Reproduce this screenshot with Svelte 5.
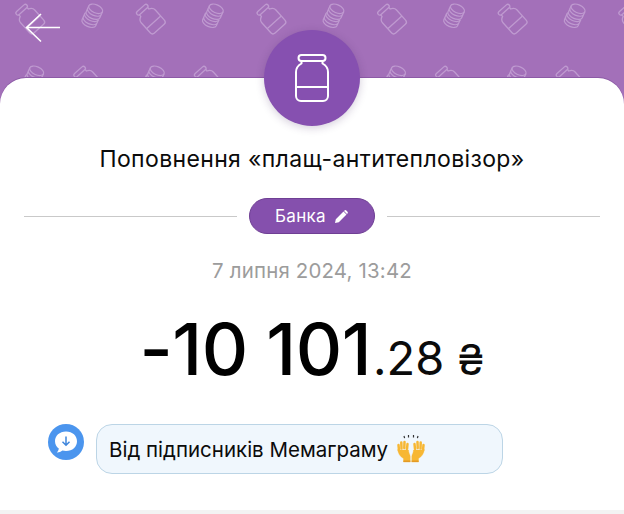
<script>
  const coins = [];
  const jars = [];
  for (let i = 0; i < 6; i++) {
    jars.push({ x: 30 + i * 120.6, y: 19 });
    coins.push({ x: 92 + i * 120.6, y: 17 });
    coins.push({ x: 33 + i * 120.6, y: 79 });
    jars.push({ x: 88 + i * 120.6, y: 81 });
  }
</script>

<div class="page">
  <header class="hero">
    <svg class="pattern" width="624" height="78" viewBox="0 0 624 78" aria-hidden="true">
      <defs>
        <g id="p-jar" fill="none" stroke="#bf9ad0" stroke-width="1.300" stroke-linejoin="round">
          <rect x="-7" y="-14.500" width="14" height="4" rx="2" />
          <path d="M-5.500-10.500v2c-2.500 1-4 2.500-4 5V10a3 3 0 0 0 3 3h13a3 3 0 0 0 3-3V-3.500c0-2.500-1.500-4-4-5v-2" />
          <path d="M-9.500 4.500H9.500" />
        </g>
        <g id="p-coin" fill="none" stroke="#bf9ad0" stroke-width="1.200">
          <ellipse cx="0" cy="-9" rx="7.500" ry="4" />
          <path d="M-7.500-9v6.500c0 2.200 3.400 4 7.500 4s7.500-1.800 7.500-4V-9M-7.500-6c0 2.200 3.400 4 7.500 4s7.500-1.800 7.500-4" />
          <path d="M-7.500-1.500c-.3.500-.5 1-.5 1.500 0 2.200 3.400 4 7.500 4S7 2.200 7 0" />
          <path d="M-8 0v6.500c0 2.200 3.400 4 7.500 4S7 8.700 7 6.500V0M-8 3.500c0 2.200 3.400 4 7.500 4S7 5.700 7 3.500" />
        </g>
      </defs>
      {#each jars as j}
        <use href="#p-jar" transform="translate({j.x} {j.y}) rotate(-42)" />
      {/each}
      {#each coins as c}
        <use href="#p-coin" transform="translate({c.x} {c.y}) rotate(24)" />
      {/each}
    </svg>
    <svg class="back" width="36" height="32" viewBox="0 0 36 32" aria-hidden="true">
      <path d="M35 14.500H2M16 1L1.500 14.500 16 28.500" fill="none" stroke="#fff" stroke-width="1.600" />
    </svg>
  </header>

  <main class="card">
    <div class="avatar">
      <svg width="34" height="48" viewBox="0 0 34 48" aria-hidden="true">
        <g fill="none" stroke="#fff" stroke-width="2" stroke-linejoin="round">
          <rect x="3.500" y="1" width="27" height="6" rx="3" />
          <path d="M6.500 7v2.500C3 11.500 1 14 1 18v24a5 5 0 0 0 5 5h22a5 5 0 0 0 5-5V18c0-4-2-6.500-5.500-8.500V7" />
          <path d="M1 33H33" />
        </g>
      </svg>
    </div>

    <h1 class="title">Поповнення «плащ-антитепловізор»</h1>

    <div class="divider">
      <span class="rule"></span>
      <button class="pill" type="button">
        Банка
        <svg width="15" height="15" viewBox="0 0 15 15" aria-hidden="true">
          <path d="M1 14l.8-3.800L9.500 2.500l3 3-7.700 7.700z M10.500 1.500a1.300 1.300 0 0 1 1.800 0l1.200 1.200a1.300 1.300 0 0 1 0 1.800l-.5.500-3-3z" fill="#fff" />
        </svg>
      </button>
      <span class="rule"></span>
    </div>

    <p class="date">7 липня 2024, 13:42</p>

    <p class="amount"><span class="whole">-10 101</span><span class="frac">.28</span><span class="cur">₴</span></p>

    <div class="message">
      <span class="badge">
        <svg width="36" height="36" viewBox="0 0 36 36" aria-hidden="true">
          <circle cx="18" cy="18" r="18" fill="#4b95ee" />
          <path d="M18 7.500c6.600 0 11 4.300 11 9.800s-4.400 9.800-11 9.800c-1.300 0-2.500-.2-3.600-.5-1.500 1.300-3.500 2-5.600 1.900 1-.9 1.800-2.300 2-3.900C8.600 23 7 20.300 7 17.300c0-5.500 4.400-9.800 11-9.800z" fill="#fff" />
          <path d="M18 12.500v8.500M14.500 17.800l3.500 3.500 3.500-3.500" fill="none" stroke="#3f86dc" stroke-width="1.500" />
        </svg>
      </span>
      <div class="bubble">
        <span>Від підписників Мемаграму</span>
        <svg class="hands" width="30" height="30" viewBox="0 0 30 30" role="img" aria-label="🙌">
          <path d="M8 2l.6 2.200M12.500 1v2.500M17.500 1v2.500M22 2l-.6 2.200" stroke="#333" stroke-width="1.200" />
          <g fill="#f7b733" stroke="#f7b733" stroke-linecap="round">
            <path d="M3 16.500L2.500 11M5.500 14.500L5.300 8.500M8.300 14L8.500 8M11 15L11.500 10" fill="none" stroke-width="2.500" />
            <path d="M1.800 16h10.700c.2 2.500.8 4 2.200 6.500V28H7.500v-3.500C4 22.500 2.200 19.500 1.800 16z" stroke-width=".4" />
            <path d="M27 16.500L27.500 11M24.500 14.500L24.700 8.500M21.700 14L21.500 8M19 15L18.500 10" fill="none" stroke-width="2.500" />
            <path d="M28.200 16H17.500c-.2 2.500-.8 4-2.200 6.500V28H22.500v-3.500C26 22.500 27.800 19.500 28.200 16z" stroke-width=".4" />
          </g>
          <path d="M15 21v8" stroke="#f0f7fd" stroke-width="1" />
          <path d="M7.500 26.500h6.800V28H7.500zM15.700 26.500h6.800V28h-6.800z" fill="#e39a25" />
        </svg>
      </div>
    </div>
  </main>

  <div class="edge"></div>
</div>

<style>
  :global(body) {
    margin: 0;
    background: #fff;
  }
  .page {
    width: 624px;
    height: 514px;
    overflow: hidden;
    position: relative;
    display: flex;
    flex-direction: column;
    background: #fff;
    font-family: Inter, "Liberation Sans", sans-serif;
    color: #0b0b0b;
  }
  .hero {
    flex: none;
    height: 104px;
    margin-bottom: -26px;
    background: #a370b9;
    position: relative;
  }
  .pattern {
    position: absolute;
    left: 0;
    top: 0;
  }
  .back {
    position: absolute;
    left: 25px;
    top: 13px;
  }
  .card {
    position: relative;
    flex: 1;
    background: #fff;
    border-radius: 26px 26px 0 0;
    box-shadow: 0 -1px 0 #8c5aa6;
    display: flex;
    flex-direction: column;
    align-items: center;
    min-height: 0;
  }
  .avatar {
    width: 96px;
    height: 96px;
    margin-top: -48px;
    border-radius: 50%;
    background: #8650b0;
    box-shadow: 0 2px 8px rgba(60, 30, 90, 0.22);
    display: flex;
    align-items: center;
    justify-content: center;
  }
  .title {
    margin: 19px 0 0;
    font-size: 23px;
    letter-spacing: 0.35px;
    line-height: 28px;
    font-weight: 400;
    white-space: nowrap;
  }
  .divider {
    width: 576px;
    margin-top: 25px;
    display: flex;
    align-items: center;
    gap: 12px;
  }
  .rule {
    flex: 1;
    height: 1px;
    background: #c9c9c9;
  }
  .pill {
    flex: none;
    width: 126px;
    height: 36px;
    box-sizing: border-box;
    border: 1px solid #6f3f94;
    border-radius: 18px;
    background: #8550ad;
    color: #fff;
    font: 400 17px Inter, "Liberation Sans", sans-serif;
    letter-spacing: 0.3px;
    display: flex;
    align-items: center;
    justify-content: center;
    gap: 8px;
    padding: 0;
  }
  .date {
    margin: 23px 0 0;
    font-size: 20.400px;
    line-height: 28px;
    color: #9c9c9c;
    letter-spacing: 0.2px;
  }
  .amount {
    margin: 29px 0 0;
    line-height: 70px;
    white-space: nowrap;
    display: flex;
    align-items: baseline;
  }
  .whole {
    font-size: 72px;
    font-weight: 500;
    letter-spacing: -0.500px;
    color: #000;
  }
  .frac {
    font-size: 47px;
    margin-left: 2px;
  }
  .cur {
    font-size: 43px;
    margin-left: 13px;
  }
  .message {
    align-self: stretch;
    margin: 30px 0 0 48px;
    display: flex;
    align-items: flex-start;
    gap: 12px;
  }
  .badge {
    flex: none;
    height: 36px;
  }
  .bubble {
    width: 407px;
    height: 50px;
    box-sizing: border-box;
    border: 1px solid #bcd5e6;
    border-radius: 16px;
    background: #f0f7fd;
    padding-left: 12px;
    display: flex;
    align-items: center;
    gap: 8px;
    font-size: 20.500px;
    white-space: nowrap;
  }
  .hands {
    flex: none;
  }
  .edge {
    position: absolute;
    left: 0;
    right: 0;
    bottom: 0;
    height: 4px;
    background: #f3f3f3;
  }
</style>
